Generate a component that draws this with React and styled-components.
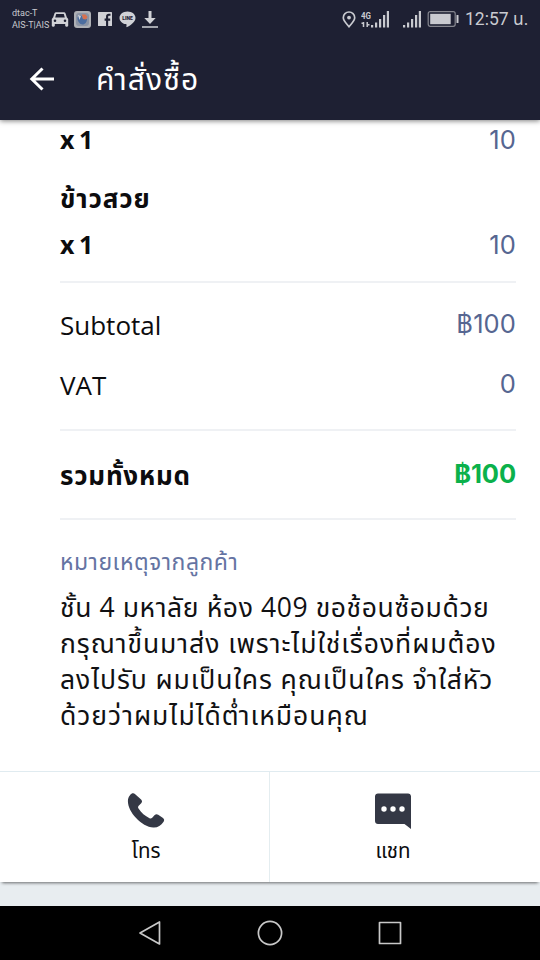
import React from 'react'
import styled, { createGlobalStyle } from 'styled-components'

const GlobalStyle = createGlobalStyle`
  * {
    box-sizing: border-box;
  }
  body {
    margin: 0;
    background: #ffffff;
    font-family: 'Open Sans', 'Noto Sans', 'Noto Sans Thai', sans-serif;
  }
`
const Screen = styled.div`
  width: 540px;
  height: 960px;
  display: flex;
  flex-direction: column;
  overflow: hidden;
  background: #ffffff;
`
const Header = styled.header`
  height: 120px;
  flex: none;
  background: #1e2033;
  box-shadow: 0 1px 5px rgba(0, 0, 0, 0.5);
`
const StatusBar = styled.div`
  height: 38px;
  padding: 0 12px;
  display: flex;
  justify-content: space-between;
  align-items: center;
  color: #c9cad0;
  font-family: Roboto, 'Noto Sans Thai', sans-serif;
`
const StatusGroup = styled.div`
  display: flex;
  align-items: center;
`
const Carrier = styled.div`
  width: 39px;
  font-size: 9px;
  line-height: 12.5px;
  white-space: nowrap;
`
const StatusIcon = styled.svg`
  display: block;
  flex: none;
  margin-left: ${props => props.$gap || 0}px;
`
const Clock = styled.div`
  margin-left: 6px;
  width: 63px;
  font-size: 17.5px;
  line-height: 38px;
  white-space: nowrap;
`
const TitleBar = styled.div`
  height: 82px;
  padding-left: 28px;
  display: flex;
  align-items: center;
`
const Title = styled.h1`
  margin: 0 0 0 40px;
  color: #ffffff;
  font-size: 30px;
  font-weight: 400;
  line-height: 40px;
  letter-spacing: 1.1px;
`
const Order = styled.main`
  height: 651px;
  flex: none;
  padding: 0 24px 0 60px;
`
const Row = styled.div`
  height: ${props => props.$height}px;
  padding-top: ${props => props.$top || 0}px;
  padding-bottom: ${props => props.$bottom || 0}px;
  display: flex;
  justify-content: space-between;
  align-items: center;
  border-bottom: ${props => (props.$line ? '2px solid #eff1f4' : 'none')};
`
const Label = styled.span`
  color: #0c0c0e;
  font-size: 26px;
  font-weight: ${props => (props.$bold ? 700 : 400)};
  letter-spacing: ${props => props.$spacing || '0'};
  line-height: 36px;
  white-space: nowrap;
`
const Quantity = styled(Label)`
  padding-bottom: 2px;
  font-size: 25px;
  font-weight: 700;
  letter-spacing: -1px;
`
const Amount = styled.span`
  padding-bottom: ${props => props.$lift || 0}px;
  color: ${props => (props.$total ? '#0bb14b' : '#566691')};
  font-family: Inter, 'Open Sans', sans-serif;
  font-size: 25.5px;
  font-weight: ${props => (props.$total ? 700 : 400)};
  letter-spacing: ${props => (props.$total ? '-0.1px' : '0.1px')};
  line-height: 36px;
`
const NoteTitle = styled.div`
  margin-top: 23px;
  color: #6574a3;
  font-size: 23px;
  line-height: 36px;
  letter-spacing: 0.5px;
  white-space: nowrap;
`
const Note = styled.div`
  margin-top: 10px;
`
const NoteLine = styled.div`
  color: #111113;
  font-size: 26.5px;
  line-height: 36px;
  height: 36px;
  letter-spacing: ${props => props.$spacing || '0'};
  white-space: nowrap;
`
const Actions = styled.div`
  position: relative;
  height: 111px;
  flex: none;
  display: flex;
  border-top: 1px solid #e0ebf0;
  background: #ffffff;
  box-shadow: 0 3px 3px -2px rgba(0, 0, 0, 0.55);
`
const Action = styled.button`
  width: 50%;
  padding: 20px 0 0;
  display: flex;
  flex-direction: column;
  align-items: center;
  border: none;
  border-right: ${props => (props.$divided ? '1px solid #e4edf0' : 'none')};
  padding-left: ${props => (props.$divided ? 23 : 0)}px;
  padding-right: ${props => (props.$divided ? 0 : 24)}px;
  background: none;
  color: #0c0c0e;
  font-family: inherit;
  font-size: 20.5px;
  line-height: 30px;
`
const ActionText = styled.span`
  margin-top: 5px;
`
const Strip = styled.div`
  height: 24px;
  flex: none;
  background: #e8edf0;
`
const NavBar = styled.nav`
  height: 54px;
  flex: none;
  display: flex;
  justify-content: center;
  align-items: center;
  gap: 92px;
  background: #000000;
`

const CarIcon = () => (
  <StatusIcon width="18" height="15" viewBox="0 0 18 15">
    <path fill="#d0d1d6" fillRule="evenodd" d="M5 .2h8c.8 0 1.300.4 1.500 1.100l1.300 4 1.400 1.700v6.500c0 .7-.4 1.200-1.100 1.200h-.8c-.7 0-1.100-.5-1.100-1.200V12H3.800v1.500c0 .7-.4 1.200-1.100 1.200h-.8c-.7 0-1.100-.5-1.100-1.200V7l1.400-1.700 1.300-4C3.700.6 4.200.2 5 .2zM5.200 2 4.200 5.400h9.600L12.800 2zM4 7.400a1.300 1.300 0 1 0 0 2.600 1.300 1.300 0 0 0 0-2.600zm10 0a1.300 1.300 0 1 0 0 2.600 1.300 1.300 0 0 0 0-2.600z" />
  </StatusIcon>
)

const AppIcon = () => (
  <StatusIcon $gap={5} width="17" height="17" viewBox="0 0 17 17">
    <rect width="17" height="17" rx="3" fill="#aeb0b5" />
    <rect x="2" y="2" width="13" height="13" rx="3" fill="#8b94a5" />
    <path d="M3.500 6.500C5 4 6.500 4 8 5l1 3 4 0c0 3-2 5.500-4.500 5.500S3 10 3.500 6.500z" fill="#4c6d9f" />
    <path d="M8 3.500h3.500L13.500 6 12 8.500 9 8z" fill="#d9714e" />
    <path d="M4 4l3 1-1.500 4z" fill="#cfd5dd" />
  </StatusIcon>
)

const FacebookIcon = () => (
  <StatusIcon $gap={7} width="14" height="14" viewBox="0 0 14 14">
    <rect width="14" height="14" rx="0.600" fill="#d0d1d6" />
    <path d="M12.500 2.800h-1.700c-1.200 0-1.700.7-1.700 1.800V14M6.600 7.600h5.600" fill="none" stroke="#1e2033" strokeWidth="2.100" />
  </StatusIcon>
)

const BubbleIcon = () => (
  <StatusIcon $gap={7} width="17" height="17" viewBox="0 0 17 17">
    <path d="M8.500.5C4 .5.500 3.300.500 6.900c0 3 2.700 5.600 6.300 6.200.9.200.9.500.6 2.500-.1.600.2.700.7.400 2.800-1.500 8.400-4.800 8.400-9.100C16.500 3.300 13 .5 8.500.5z" fill="#d0d1d6" />
    <text x="8.500" y="8.900" textAnchor="middle" fontFamily="Roboto, sans-serif" fontSize="5" fontWeight="900" fill="#1e2033">LINE</text>
  </StatusIcon>
)

const DownloadIcon = () => (
  <StatusIcon $gap={5} width="18" height="17" viewBox="0 0 18 17">
    <path d="M7.500 0h3v7h4.200L9 13 3.300 7h4.200zM1 15.300h16v1.400H1z" fill="#d0d1d6" />
  </StatusIcon>
)

const PinIcon = () => (
  <StatusIcon width="14" height="17" viewBox="0 0 14 17">
    <path d="M7 1a5.700 5.700 0 0 0-5.700 5.700C1.300 9.700 4 12 7 15.700c3-3.700 5.700-6 5.700-9A5.700 5.700 0 0 0 7 1z" fill="none" stroke="#c9cad0" strokeWidth="1.700" />
    <circle cx="7" cy="6.600" r="1.900" fill="#c9cad0" />
  </StatusIcon>
)

const SignalIcon = ({ gap }) => (
  <StatusIcon $gap={gap} width="18" height="17" viewBox="0 0 18 17">
    <path d="M0 14h2.200v2.500H0zM4 11.500h2.200v5H4zM8 8h2.200v8.500H8zM12 4h2.200v12.500H12zM15.800 0H18v16.500h-2.200z" fill="#c9cad0" />
  </StatusIcon>
)

const NetworkIcon = () => (
  <StatusIcon $gap={5} width="10" height="17" viewBox="0 0 10 17">
    <text x="0" y="7.500" fontFamily="Roboto, sans-serif" fontSize="8.500" fontWeight="700" textLength="10" lengthAdjust="spacingAndGlyphs" fill="#c9cad0">4G</text>
    <path d="M2.500 16v-5M.500 12.300h2M6.200 11v5M6.200 13.700h2.300" fill="none" stroke="#c9cad0" strokeWidth="1.500" />
  </StatusIcon>
)

const BatteryIcon = () => (
  <StatusIcon $gap={6} width="32" height="16" viewBox="0 0 32 16">
    <rect x="1.200" y="0.700" width="27" height="14.600" rx="2" fill="none" stroke="#85868f" strokeWidth="1.200" />
    <rect x="3.200" y="2.800" width="20.500" height="10.400" fill="#c9cad0" />
    <rect x="29.500" y="4" width="2" height="8" rx="0.500" fill="#c9cad0" />
  </StatusIcon>
)

const BackArrow = () => (
  <svg width="28" height="26" viewBox="0 0 28 26">
    <path d="M26 13H4M14.500 2.500 3.800 13l10.700 10.500" fill="none" stroke="#ffffff" strokeWidth="3" />
  </svg>
)

const PhoneIcon = () => (
  <svg width="38" height="38" viewBox="0 0 38 38">
    <path d="M3 3.200C4.600 1 6.600.6 8.200 2.200l5.900 5.300c1.200 1.200 1.200 2.600.1 3.700l-2.500 2.600c-.8.900-.8 1.800-.2 2.800 2.800 4.300 6.500 7.500 11 9.700 1 .5 1.900.3 2.700-.5l2.500-2.700c1-1.100 2.200-1.200 3.500-.4l4.800 3.400c1.400 1.100 1.500 2.500.4 4-2.300 3.700-5.800 5.700-10 5.500-6-.3-12.300-4.200-17.300-9.500C4 20.600 1 14.600.9 9.200c0-2.400.6-4.400 2.100-6z" fill="#343845" />
  </svg>
)

const ChatIcon = () => (
  <svg width="38" height="38" viewBox="0 0 38 38">
    <path d="M4 1.500h30c1.700 0 3 1.300 3 3V37l-6.500-5H4c-1.700 0-3-1.300-3-3V4.500c0-1.700 1.300-3 3-3z" fill="#343845" />
    <circle cx="10" cy="17" r="2.700" fill="#ffffff" />
    <circle cx="19" cy="17" r="2.700" fill="#ffffff" />
    <circle cx="28" cy="17" r="2.700" fill="#ffffff" />
  </svg>
)

const NavIcon = ({ children }) => (
  <svg width="28" height="28" viewBox="0 0 28 28" fill="none" stroke="#c8c8c8" strokeWidth="1.700" strokeLinejoin="round">
    {children}
  </svg>
)

const noteLines = [
  { text: 'ชั้น 4 มหาลัย ห้อง 409 ขอช้อนซ้อมด้วย', spacing: '0.6px' },
  { text: 'กรุณาขึ้นมาส่ง เพราะไม่ใช่เรื่องที่ผมต้อง', spacing: '0.95px' },
  { text: 'ลงไปรับ ผมเป็นใคร คุณเป็นใคร จำใส่หัว', spacing: '0.93px' },
  { text: 'ด้วยว่าผมไม่ได้ต่ำเหมือนคุณ', spacing: '1px' },
]

const App = () => {
  return (
    <>
      <GlobalStyle />
      <Screen>
        <Header>
          <StatusBar>
            <StatusGroup>
              <Carrier>
                <div>dtac-T</div>
                <div>AIS-T|AIS</div>
              </Carrier>
              <CarIcon />
              <AppIcon />
              <FacebookIcon />
              <BubbleIcon />
              <DownloadIcon />
            </StatusGroup>
            <StatusGroup>
              <PinIcon />
              <NetworkIcon />
              <SignalIcon gap={0} />
              <SignalIcon gap={14} />
              <BatteryIcon />
              <Clock>12:57 น.</Clock>
            </StatusGroup>
          </StatusBar>
          <TitleBar>
            <BackArrow />
            <Title>คำสั่งซื้อ</Title>
          </TitleBar>
        </Header>
        <Order>
          <Row $height={40}>
            <Quantity>x 1</Quantity>
            <Amount>10</Amount>
          </Row>
          <Row $height={62} $top={14}>
            <Label $bold $spacing="0.9px">ข้าวสวย</Label>
          </Row>
          <Row $height={61} $bottom={14} $line>
            <Quantity>x 1</Quantity>
            <Amount>10</Amount>
          </Row>
          <Row $height={86} $bottom={2}>
            <Label>Subtotal</Label>
            <Amount $lift={3}>฿100</Amount>
          </Row>
          <Row $height={62} $bottom={28} $line>
            <Label>VAT</Label>
            <Amount $lift={3}>0</Amount>
          </Row>
          <Row $height={89} $line>
            <Label $bold $spacing="0.75px">รวมทั้งหมด</Label>
            <Amount $total $lift={2}>฿100</Amount>
          </Row>
          <NoteTitle>หมายเหตุจากลูกค้า</NoteTitle>
          <Note>
            {noteLines.map(line => (
              <NoteLine key={line.text} $spacing={line.spacing}>{line.text}</NoteLine>
            ))}
          </Note>
        </Order>
        <Actions>
          <Action $divided>
            <PhoneIcon />
            <ActionText>โทร</ActionText>
          </Action>
          <Action>
            <ChatIcon />
            <ActionText>แชท</ActionText>
          </Action>
        </Actions>
        <Strip />
        <NavBar>
          <NavIcon><path d="M23.500 3v22L4 14z" /></NavIcon>
          <NavIcon><circle cx="14" cy="14" r="11.600" /></NavIcon>
          <NavIcon><rect x="3.500" y="3.500" width="21" height="21" /></NavIcon>
        </NavBar>
      </Screen>
    </>
  )
}

export default App
